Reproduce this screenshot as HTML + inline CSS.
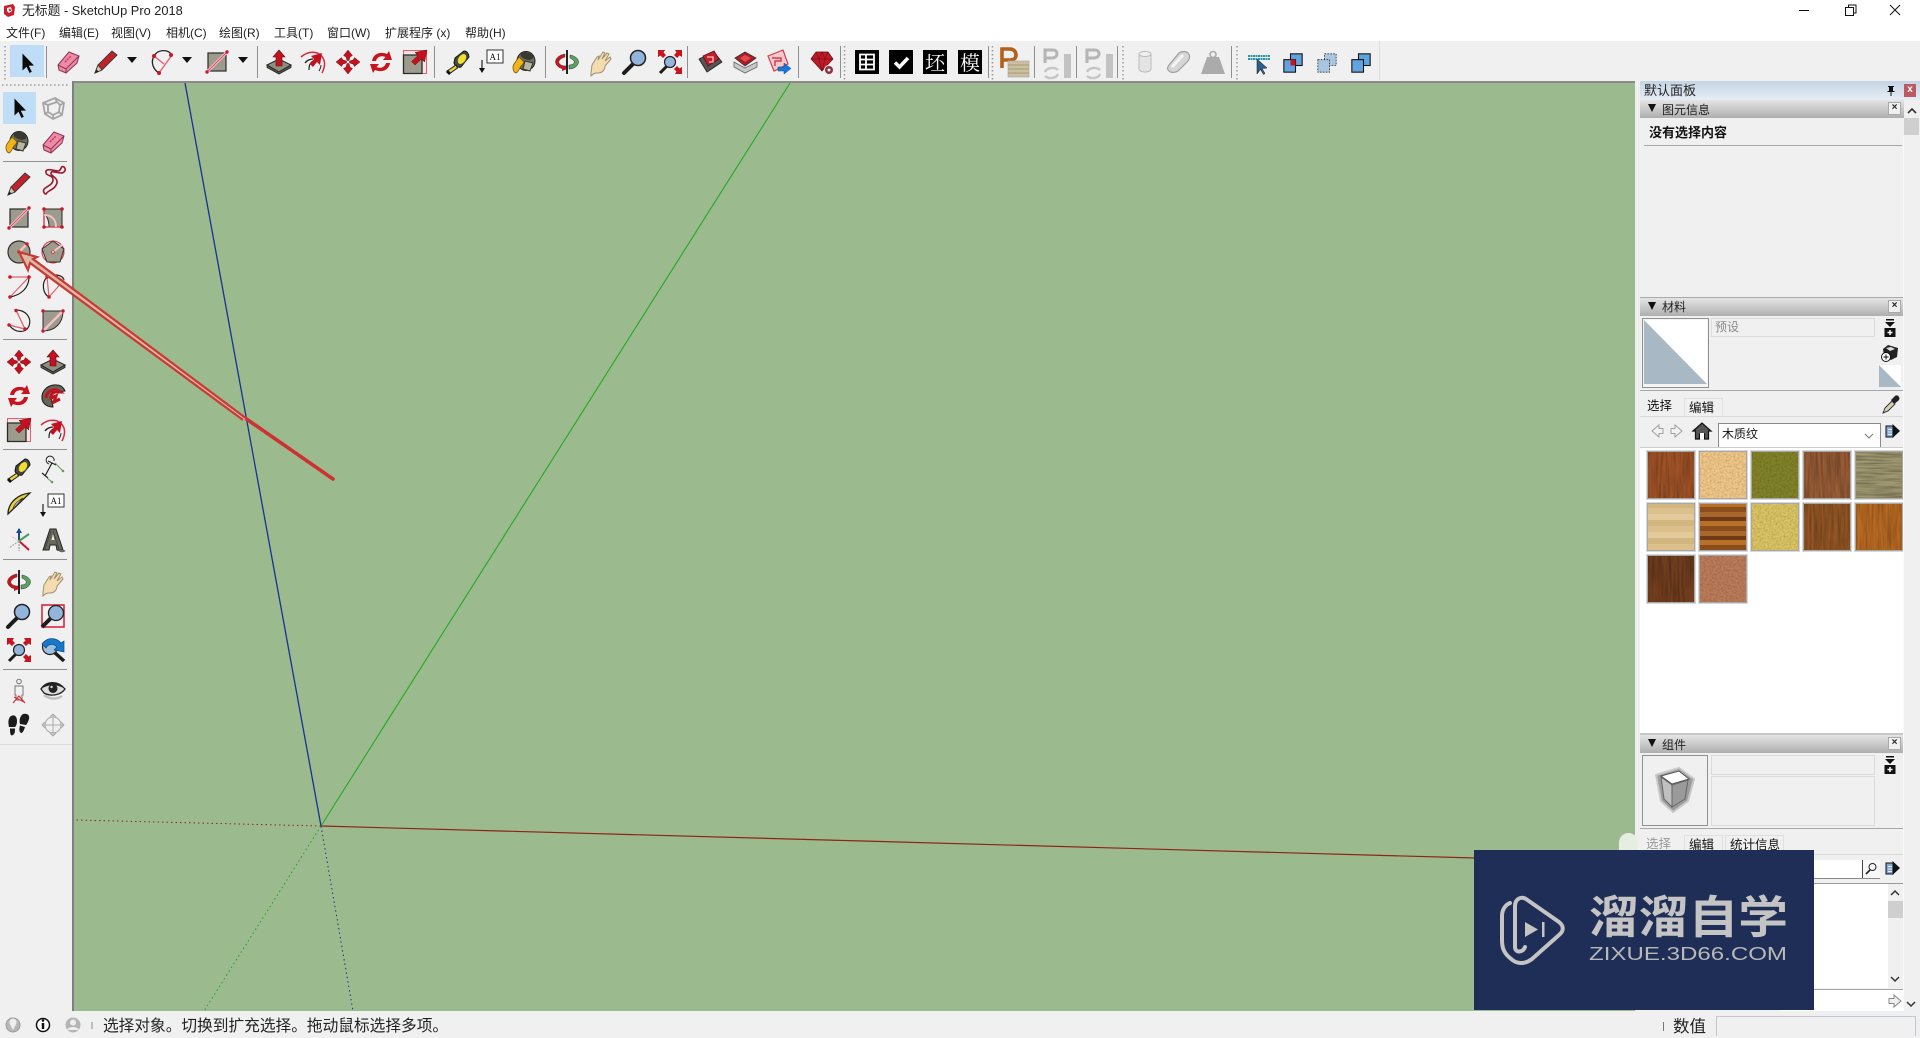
<!DOCTYPE html>
<html lang="zh">
<head>
<meta charset="utf-8">
<title>无标题 - SketchUp Pro 2018</title>
<style>
html,body{margin:0;padding:0;width:1920px;height:1036px;overflow:hidden;background:#f0f0f0;font-family:"Liberation Sans","Noto Sans CJK SC",sans-serif;color:#111}
.a{position:absolute;white-space:nowrap}
.b{position:absolute;box-sizing:border-box}
.hd{position:absolute;box-sizing:border-box;left:1640px;width:264px;height:18px;background:linear-gradient(#e4e4e4,#aeaeae);font-size:12px;line-height:18px;color:#222}
.hd i{position:absolute;left:8px;top:4px;width:0;height:0;border-left:4.500px solid transparent;border-right:4.500px solid transparent;border-top:8px solid #111}
.hd span{position:absolute;left:22px;top:1px}
.hd b{position:absolute;right:3px;top:2px;width:13px;height:13px;box-sizing:border-box;background:#f0f0f0;border:1px solid #aaa;font:bold 10px/10px "Liberation Sans",sans-serif;text-align:center;color:#222}
.sw{position:absolute;width:48px;height:48px;box-sizing:border-box;border:1px solid #a8a8a8;outline:1px solid #d8d8d8}
.sep{position:absolute;background:#8f8f8f}
.m{position:absolute;white-space:nowrap;top:25px;font-size:12px;line-height:16px;color:#222}
.vs{position:absolute;background:#8f8f8f;top:46px;width:1px;height:32px}
</style>
</head>
<body>
<svg width="0" height="0" style="position:absolute">
<defs>
<filter id="gv" x="0" y="0" width="100%" height="100%"><feTurbulence type="fractalNoise" baseFrequency="0.5 0.03" numOctaves="2" seed="3"/><feColorMatrix values="0 0 0 0 0 0 0 0 0 0 0 0 0 0 0 0.500 0 0 0 -0.160"/><feComposite in2="SourceAlpha" operator="in"/></filter>
<filter id="gh" x="0" y="0" width="100%" height="100%"><feTurbulence type="fractalNoise" baseFrequency="0.03 0.6" numOctaves="2" seed="5"/><feColorMatrix values="0 0 0 0 0 0 0 0 0 0 0 0 0 0 0 0.600 0 0 0 -0.180"/><feComposite in2="SourceAlpha" operator="in"/></filter>
<filter id="gs" x="0" y="0" width="100%" height="100%"><feTurbulence type="fractalNoise" baseFrequency="0.5" numOctaves="2" seed="8"/><feColorMatrix values="0 0 0 0 0 0 0 0 0 0 0 0 0 0 0 0.350 0 0 0 -0.120"/><feComposite in2="SourceAlpha" operator="in"/></filter>
<symbol id="sel" viewBox="0 0 24 24" overflow="visible"><path d="M7.500 2.500v17l4-3.800 3 6.300 2.300-1.200-3-6 5.200-.3z" fill="#0b0b0b"/></symbol>
<symbol id="box" viewBox="0 0 24 24" overflow="visible"><g fill="none" stroke="#a5a5a5" stroke-width="1.800"><path d="M2 7 14 2l9 5-2 12-9 4-8-5z"/><path d="M7 9l9-3 3 3-1 7-6 3-5-3z"/><path d="M2 7l5 2M14 2l2 4M23 7l-4 2M21 19l-3-3M12 23v-4M4 18l3-2"/></g></symbol>
<symbol id="erase" viewBox="0 0 24 24" overflow="visible"><path d="M2 15 13 2l10 4-2 7L10 23 3 20z" fill="#f08aa6" stroke="#8a3550" stroke-width="1"/><path d="M2 15l8 4 13-13" fill="none" stroke="#8a3550"/><path d="M10 19v4" stroke="#8a3550"/><path d="M9 12l6-6" stroke="#b84060" stroke-width="1.500" stroke-dasharray="2 1"/></symbol>
<symbol id="pencil" viewBox="0 0 24 24" overflow="visible"><path d="M1 23 4 15 18 1l5 4L8 20z" fill="#c4202c" stroke="#3a3a3a" stroke-width="1"/><path d="M1 23 4 15l4 5z" fill="#d9c6a0" stroke="#333" stroke-width=".8"/><path d="M1 23l1.500-3.500 2 2z" fill="#222"/></symbol>
<symbol id="arc" viewBox="0 0 24 24" overflow="visible"><path d="M4 6C8-1 18-1 22 5" fill="none" stroke="#222" stroke-width="1.300"/><path d="M4 6C0 13 4 20 9 23" fill="none" stroke="#222" stroke-width="1.300"/><path d="M4 6 14 14M22 5 9 23" stroke="#e06070" stroke-width="1.400" fill="none"/><g fill="#c8192b"><circle cx="4" cy="6" r="2"/><circle cx="21" cy="5" r="2"/><circle cx="9" cy="23" r="2"/></g></symbol>
<symbol id="rect" viewBox="0 0 24 24" overflow="visible"><rect x="3" y="3" width="18" height="18" fill="#9d9c8c" stroke="#2a2a2a" stroke-width="1.200"/><path d="M2 22 22 2" stroke="#f4c0c8" stroke-width="3"/><path d="M2 22 22 2" stroke="#d52b40" stroke-width=".8"/><circle cx="2" cy="22" r="1.700" fill="#c8192b"/><circle cx="22" cy="2" r="1.700" fill="#c8192b"/></symbol>
<symbol id="rotrect" viewBox="0 0 24 24" overflow="visible"><path d="M3 3H21V21H8C8 12 4 8 3 8z" fill="#9d9c8c" stroke="#2a2a2a"/><path d="M3 3v18H21" fill="none" stroke="#d52b40" stroke-width="1.300"/><path d="M3 9c8 0 12 5 12 12" fill="none" stroke="#f4c0c8" stroke-width="2"/><g fill="#c8192b"><circle cx="3" cy="3" r="1.800"/><circle cx="21" cy="3" r="1.800"/><circle cx="3" cy="21" r="1.800"/><circle cx="21" cy="21" r="1.800"/></g></symbol>
<symbol id="circle" viewBox="0 0 24 24" overflow="visible"><circle cx="12" cy="12" r="11" fill="#9d9c8c" stroke="#2e2e2e" stroke-width="1.200"/><path d="M12 12 20 4" stroke="#f4c0c8" stroke-width="2.500"/><circle cx="12" cy="12" r="1.700" fill="#c8192b"/><circle cx="20" cy="4" r="1.700" fill="#c8192b"/></symbol>
<symbol id="poly" viewBox="0 0 24 24" overflow="visible"><circle cx="12" cy="12" r="11" fill="#f0e4e4" stroke="#d52b40" stroke-width="1"/><path d="M12 1 23 9 19 22H6L1 9z" fill="#9d9c8c" stroke="#333" stroke-width="1"/><path d="M12 12 21 5" stroke="#f4c0c8" stroke-width="2"/><circle cx="12" cy="12" r="1.500" fill="#f4c0c8" stroke="#c8192b" stroke-width=".6"/></symbol>
<symbol id="arc1" viewBox="0 0 24 24" overflow="visible"><path d="M3 23C14 21 22 14 22 3" fill="none" stroke="#222" stroke-width="1.200"/><path d="M3 3H22L3 23" fill="none" stroke="#e06070" stroke-width="1.200"/><g fill="#c8192b"><circle cx="3" cy="3" r="1.800"/><circle cx="22" cy="3" r="1.800"/><circle cx="3" cy="23" r="1.800"/></g></symbol>
<symbol id="arc2" viewBox="0 0 24 24" overflow="visible"><path d="M6 3C0 9 2 20 8 23 M6 3C12 -1 22 1 23 6" fill="none" stroke="#222" stroke-width="1.200"/><path d="M6 3 23 6 8 23Z" fill="none" stroke="#e06070" stroke-width="1.200"/><g fill="#c8192b"><circle cx="6" cy="3" r="1.700"/><circle cx="8" cy="23" r="1.800"/></g></symbol>
<symbol id="arc3" viewBox="0 0 24 24" overflow="visible"><path d="M9 1C19 1 25 9 22 17 19 24 9 25 2 16" fill="none" stroke="#222" stroke-width="1.200"/><path d="M9 1 18 20 2 16" fill="none" stroke="#e06070" stroke-width="1.300"/><g fill="#c8192b"><circle cx="9" cy="1.500" r="1.700"/><circle cx="18" cy="20" r="1.700"/><circle cx="2" cy="16" r="1.700"/></g></symbol>
<symbol id="pie" viewBox="0 0 24 24" overflow="visible"><path d="M2 2H22C22 14 14 22 2 22Z" fill="#9d9c8c" stroke="#2e2e2e" stroke-width="1"/><path d="M2 22 22 2" stroke="#f4c0c8" stroke-width="2.500"/><g fill="#c8192b"><circle cx="2" cy="2" r="1.700"/><circle cx="22" cy="2" r="1.700"/><circle cx="2" cy="22" r="1.700"/></g></symbol>
<symbol id="move" viewBox="0 0 24 24" overflow="visible"><g fill="#c4101f" stroke="#501010" stroke-width=".4"><path d="M12 0 16.500 5.500 14 7 13 10.500H11L10 7 7.500 5.500z"/><path d="M12 24 16.500 18.500 14 17 13 13.500H11L10 17 7.500 18.500z"/><path d="M0 12 5.500 7.500 7 10 10.500 11V13L7 14 5.500 16.500z"/><path d="M24 12 18.500 7.500 17 10 13.500 11V13L17 14 18.500 16.500z"/></g></symbol>
<symbol id="push" viewBox="0 0 24 24" overflow="visible"><path d="M0 15 12 9l12 6-12 7z" fill="#8f8f7e" stroke="#222"/><path d="M0 15v2.500L12 24l12-6.500V15L12 22z" fill="#5b5b50" stroke="#222" stroke-width=".8"/><path d="M12 0 18 7H15V16H9V7H6z" fill="#c4101f" stroke="#601010" stroke-width=".6"/></symbol>
<symbol id="rotate" viewBox="0 0 24 24" overflow="visible"><g fill="#c8141f"><path d="M3 11C4 4 11 1 18 4L20 1 23 10 14 10 16.500 7C12 5 8 7 7 11z"/><path d="M21 13C20 20 13 23 6 20L4 23 1 14 10 14 7.500 17C12 19 16 17 17 13z"/></g></symbol>
<symbol id="follow" viewBox="0 0 24 24" overflow="visible"><path d="M1 15C0 6 8 0 16 1c4 0 7 3 8 6l-8 1c-5 0-6 5-5 9 0 3 1 5 1 6-6 0-10-3-11-8z" fill="#666658" stroke="#1a1a1a"/><path d="M5 14c0-6 6-9 11-8l3 2-5 0c-3 1-4 4-4 6l5-2-2 6 6-3" fill="none" stroke="#c4101f" stroke-width="3"/></symbol>
<symbol id="scale" viewBox="0 0 24 24" overflow="visible"><rect x=".500" y=".500" width="23" height="23" fill="#f4e4e4" stroke="#e06070"/><path d="M.500 5H19v18.500H.500z" fill="#9d9c8c" stroke="#2a2a2a" stroke-width="1.300"/><path d="M24 0 21.500 12 18.500 9 12 15 8.500 11.500 15 5.500 12 2.500z" fill="#c4101f" stroke="#601010" stroke-width=".5"/></symbol>
<symbol id="offset" viewBox="0 0 24 24" overflow="visible"><path d="M0 7C8 0 18 1 22 8c3 5 1 11-1 15" fill="none" stroke="#d52b40" stroke-width="1.500"/><path d="M4 13c2-3 6-4 8-4" fill="none" stroke="#222" stroke-width="1.300"/><path d="M8 20c0-5 1-7 4-9" fill="none" stroke="#222" stroke-width="1.200"/><path d="M21 3 19 15 16 12 12 17 9 14 13 9 10 6z" fill="#c4101f"/><path d="M18 21c1-2 2-3 2-6" fill="none" stroke="#222"/></symbol>
<symbol id="tape" viewBox="0 0 24 24" overflow="visible"><path d="M9 8 18 1c3 0 5 3 5 6l-8 10c-3 1-6-1-7-4z" fill="#4a4a40" stroke="#111"/><ellipse cx="16" cy="9" rx="4" ry="6" transform="rotate(35 16 9)" fill="#f0e030" stroke="#444"/><path d="M1 21 10 15l1.500 3L3 24z" fill="#e8d040" stroke="#222"/><path d="M0 22l3 3 2-2-3-3z" fill="#111"/></symbol>
<symbol id="dims" viewBox="0 0 24 24" overflow="visible"><g stroke="#222" stroke-width="1.200" fill="none"><path d="M11 5 4 18"/><path d="M7 3l8 4M1 15l6 5"/><path d="M13 3a4 4 0 1 0-5 3" stroke-width="1"/></g><path d="M14 5 22 13M6 20 11 24" stroke="#6a9a5a" stroke-width="1"/><circle cx="22" cy="13" r="1.300" fill="#6a9a5a"/><circle cx="11" cy="24" r="1.300" fill="#6a9a5a"/></symbol>
<symbol id="text" viewBox="0 0 24 24" overflow="visible"><rect x="7" y="0" width="16" height="13" fill="#fff" stroke="#333"/><path d="M2 10V19" stroke="#222" stroke-width="1.200"/><path d="M-1 18H5L2 23z" fill="#111"/><text x="15" y="10" font-family="Liberation Serif,serif" font-size="9" text-anchor="middle" fill="#111">A1</text></symbol>
<symbol id="paint" viewBox="0 0 24 24" overflow="visible"><ellipse cx="14" cy="11" rx="9" ry="9.500" fill="#6e6e60" stroke="#222"/><ellipse cx="15" cy="6" rx="6.500" ry="3.600" transform="rotate(15 15 6)" fill="#39392f"/><path d="M13 11l8 2-3 8-7-2z" fill="#b8b79c" stroke="#333"/><path d="M7 7 2 14c-2 3-1 8 2 9 2 0 3-4 5-7 2-2 3-4 3-4z" fill="#f2b418" stroke="#6a5000" stroke-width=".7"/></symbol>
<symbol id="prot" viewBox="0 0 24 24" overflow="visible"><path d="M1 22C1 10 12 2 23 1L1 22Z" fill="#e8d040" stroke="#222" stroke-width="1.300"/><path d="M6 17C7 12 12 8 16 6L6 17Z" fill="#f0f0f0" stroke="#333" stroke-width=".8"/></symbol>
<symbol id="axes" viewBox="0 0 24 24" overflow="visible"><path d="M12 13V1" stroke="#1a4a90" stroke-width="2"/><path d="M12 13 4 8" stroke="#f0b8b8" stroke-width="1" stroke-dasharray="2 1"/><path d="M12 13 22 22" stroke="#c8192b" stroke-width="2"/><path d="M12 13 22 6" stroke="#4a9a5a" stroke-width="2"/><path d="M12 13 2 20" stroke="#90b090" stroke-width="1" stroke-dasharray="2 1"/><path d="M12 13V23" stroke="#aaa" stroke-width="1.500" stroke-dasharray="2 1"/><path d="M12 0l3 5H9z" fill="#1a4a90"/></symbol>
<symbol id="t3d" viewBox="0 0 24 24" overflow="visible"><path d="M2 22 9 1H15L22 22H16L15 17H9L8 22z" fill="#6a6a5c" stroke="#222"/><path d="M4 21 10 3M12 3l6 18" stroke="#444" stroke-width="1"/><path d="M10.500 12 12 6l1.500 6z" fill="#f0f0f0"/><path d="M16 22l5 2 3-1-2-1z" fill="#8a8a78" stroke="#333" stroke-width=".6"/></symbol>
<symbol id="orbit" viewBox="0 0 24 24" overflow="visible"><path d="M10 4C3 5-1 10 1 14c2 4 6 5 10 5v-3c-3 0-6-1-7-3-1-2 2-5 6-6z" fill="#c8141f" stroke="#444" stroke-width=".5"/><path d="M15 5c6 1 10 5 8 9-2 4-6 5-9 5v-4c4 0 6-2 5-4-1-1-2-2-4-3z" fill="#5aa060" stroke="#333" stroke-width=".5"/><path d="M12 0V24" stroke="#222" stroke-width="2"/><path d="M7 16v5l5-2z" fill="#c8141f"/></symbol>
<symbol id="pan" viewBox="0 0 24 24" overflow="visible"><path d="M2 23 3 15 8 7l2-1-1 4 5-8 2 1-3 6 5-6 2 1-4 7 5-4 1 2-6 7c0 4-3 7-7 7-3 0-4 0-7 3z" fill="#f3ddb0" stroke="#a09070" stroke-width="1"/></symbol>
<symbol id="zoom" viewBox="0 0 24 24" overflow="visible"><path d="M1 23l9-9" stroke="#1c1c1c" stroke-width="4" stroke-linecap="round"/><circle cx="15" cy="8" r="7.500" fill="#93b5dc" stroke="#222" stroke-width="1.500"/></symbol>
<symbol id="zoomw" viewBox="0 0 24 24" overflow="visible"><rect x="1" y="1" width="22" height="22" fill="none" stroke="#d52b40" stroke-width="1.600"/><path d="M1 23l9-9" stroke="#1c1c1c" stroke-width="4"/><circle cx="15" cy="9" r="7.500" fill="#93b5dc" stroke="#222" stroke-width="1.300"/></symbol>
<symbol id="zoomx" viewBox="0 0 24 24" overflow="visible"><path d="M2 23 9 16" stroke="#1c1c1c" stroke-width="3"/><circle cx="12" cy="12" r="5.500" fill="#93b5dc" stroke="#222" stroke-width="1.200"/><g fill="#c8141f"><path d="M0 0H7L5.500 2.500 8 5 5 8 2.500 5.500 0 7z"/><path d="M24 0H17L18.500 2.500 16 5 19 8 21.500 5.500 24 7z"/><path d="M24 24H17L18.500 21.500 16 19 19 16 21.500 18.500 24 17z"/></g></symbol>
<symbol id="prev" viewBox="0 0 24 24" overflow="visible"><path d="M23 23 13 14" stroke="#1c1c1c" stroke-width="3.500"/><circle cx="9" cy="9" r="7.500" fill="#9ec0e0" stroke="#222" stroke-width="1.200"/><path d="M1 6C6-1 15-1 20 5L23 3 23 14 13 12 16 9C12 5 7 6 5 10z" fill="#1a78c8" stroke="#0a4a88" stroke-width=".7"/></symbol>
<symbol id="walk" viewBox="0 0 24 24" overflow="visible"><g fill="none" stroke="#777" stroke-width="1"><circle cx="12" cy="2.500" r="2.300"/><path d="M8 7h8l0 9-1 0 0 5h-6l0-5-1 0z"/></g><path d="M6 24 12 17 18 24M7 18l10 5" stroke="#d52b40" stroke-width="1.200" fill="none"/></symbol>
<symbol id="eye" viewBox="0 0 24 24" overflow="visible"><path d="M0 10C5 2 17 1 24 10c-4 6-14 8-21 4z" fill="#ddd" stroke="#222" stroke-width="1.300"/><path d="M0 10C5 2 17 1 24 10C17 5 7 5 0 10z" fill="#222"/><circle cx="12" cy="9.500" r="4.500" fill="#222"/><circle cx="10.500" cy="8" r="1.200" fill="#ddd"/><path d="M3 16c5 4 12 5 18 1" stroke="#c0c0c0" stroke-width="2.500" fill="none"/></symbol>
<symbol id="foot" viewBox="0 0 24 24" overflow="visible"><g fill="#1b1b1b"><path d="M4 3c4-2 6 1 6 5 0 3-1 5-2 6H2C1 10 1 5 4 3z"/><path d="M3 15.500h5c0 3 0 6-3 7-2 0-2-4-2-7z"/><path d="M16 1c4-1 7 1 6 5-1 3-2 5-3 6l-6-1c-1-4 0-8 3-10z"/><path d="M13 12.500 18 14c-1 3-2 6-4 6-2-1-2-4-1-7.500z"/></g></symbol>
<symbol id="sect" viewBox="0 0 24 24" overflow="visible"><g fill="none" stroke="#aaa" stroke-width="1"><circle cx="12" cy="12" r="8"/><path d="M12 1V23M1 12H23M12 1l-3 3M12 1l3 3M1 12l3-3M1 12l3 3M23 12l-3-3M23 12l-3 3M12 23l-3-3M12 23l3-3"/></g></symbol>
<symbol id="wh1" viewBox="0 0 24 24" overflow="visible"><path d="M1 9 16 2l8 10-15 10z" fill="#555" stroke="#222" stroke-width=".8"/><path d="M5 6 16 1l5 8-11 7z" fill="#c2202c" stroke="#5a1010" stroke-width=".8"/><path d="M9 7h6v5H11" fill="none" stroke="#f0c0c0" stroke-width="1.300"/></symbol>
<symbol id="wh2" viewBox="0 0 24 24" overflow="visible"><path d="M1 12 12 18l12-6v5L12 23 1 17z" fill="#c9c9c9" stroke="#666" stroke-width=".8"/><path d="M2 8 12 2l11 6-11 8z" fill="#b01a28" stroke="#333" stroke-width=".8"/><path d="M7 8l5-3 6 3-6 4z" fill="#e04a4a"/></symbol>
<symbol id="wh3" viewBox="0 0 24 24" overflow="visible"><path d="M1 6 16 0l5 14-14 7z" fill="#f6c8cc" stroke="#d04050" stroke-width="1.200"/><path d="M5 8h9v3H8v5" fill="none" stroke="#d04050" stroke-width="1.500"/><path d="M11 17h6v-4l7 5.500L17 24v-3h-6z" fill="#1a78d8" stroke="#0a4a88" stroke-width=".5"/></symbol>
<symbol id="ruby" viewBox="0 0 24 24" overflow="visible"><path d="M6 2H18L23 9 12 21 1 9z" fill="#c01a26" stroke="#601010" stroke-width=".7"/><path d="M1 9H23M6 2l3 7 3 12 3-12 3-7M9 9l3-7 3 7" fill="none" stroke="#7d0f18" stroke-width=".7"/><circle cx="19" cy="20" r="4.500" fill="#8a3040" stroke="#eee"/><circle cx="19" cy="20" r="1.500" fill="#eee"/></symbol>
<symbol id="stylei" viewBox="0 0 24 24" overflow="visible"><rect width="24" height="24" fill="#000"/><path d="M5 4.500H19V19.500H5ZM5 9.500H19M5 14.500H19M11 4.500V19.500" fill="none" stroke="#fff" stroke-width="1.800"/></symbol>
<symbol id="stylec" viewBox="0 0 24 24" overflow="visible"><rect width="24" height="24" fill="#000"/><path d="M6 12.500 10.500 17 19 8" fill="none" stroke="#fff" stroke-width="3.500"/></symbol>
<symbol id="P1" viewBox="0 0 30 36" overflow="visible"><path d="M3 22V3H11C15 3 17 6 17 9S15 14 11 14H3" fill="none" stroke="#b4601a" stroke-width="3.600"/><rect x="9" y="15" width="21" height="16" fill="#ccc0a0" stroke="#aaa" stroke-width=".7"/><path d="M9 19H30M9 23H30M9 27H30" stroke="#a89a78"/></symbol>
<symbol id="P2" viewBox="0 0 30 36" overflow="visible"><path d="M3 17V4H11C14 4 15 6 15 8S13 12 10 12H3" fill="none" stroke="#b5b5b5" stroke-width="3"/><rect x="22" y="8" width="7" height="24" fill="#c2c2c2"/><path d="M3 26c2-5 10-5 13-2M16 28c-2 5-10 5-13 2" fill="none" stroke="#c6c6c6" stroke-width="2.400"/></symbol>
<symbol id="cyl" viewBox="0 0 24 24" overflow="visible"><path d="M6 4v15c0 2 3 3 6 3s6-1 6-3V4z" fill="#e4e4e4" stroke="#bbb"/><ellipse cx="12" cy="4" rx="6" ry="2.500" fill="#f0f0f0" stroke="#bbb"/></symbol>
<symbol id="pill" viewBox="0 0 24 24" overflow="visible"><path d="M2 15 12 3c3-2 7-2 9 0s2 5 0 8L11 21c-3 2-7 2-9 0s-2-3 0-6z" fill="#d6d6d6" stroke="#a0a0a0" stroke-width="1.200"/><path d="M5 17 16 5" stroke="#f4f4f4" stroke-width="3"/></symbol>
<symbol id="wgt" viewBox="0 0 24 24" overflow="visible"><path d="M6 7H18L24 24H0z" fill="#ababab"/><circle cx="12" cy="4.500" r="3" fill="none" stroke="#ababab" stroke-width="1.600"/></symbol>
<symbol id="secp" viewBox="0 0 24 24" overflow="visible"><path d="M1 4H23M1 7H23" stroke="#2a98aa" stroke-width="2" stroke-dasharray="2 .5"/><path d="M10 7V22l3.500-4.500 3 5 1.500-1-3-5 5-.5z" fill="#2b5e8e" stroke="#111" stroke-width=".5"/></symbol>
<symbol id="sq1" viewBox="0 0 24 24" overflow="visible"><rect x="9" y="1" width="14" height="14" fill="#5fa4e0" stroke="#111" stroke-width="1.300"/><rect x="1" y="8" width="14" height="15" fill="#5fa4e0" stroke="#111" stroke-width="1.300"/><rect x="9" y="8" width="6" height="7" fill="#c8141f"/></symbol>
<symbol id="sq2" viewBox="0 0 24 24" overflow="visible"><rect x="9" y="1" width="14" height="14" fill="#a8c5e2" stroke="#333" stroke-dasharray="2 1.500"/><rect x="1" y="8" width="14" height="15" fill="#a8c5e2" stroke="#333" stroke-dasharray="2 1.500"/></symbol>
<symbol id="sq3" viewBox="0 0 24 24" overflow="visible"><rect x="9" y="1" width="14" height="14" fill="#5fa4e0" stroke="#111" stroke-width="1.300"/><rect x="1" y="8" width="14" height="15" fill="#5fa4e0" stroke="#111" stroke-width="1.300"/></symbol>
<symbol id="dl" viewBox="0 0 14 18" overflow="visible"><path d="M3 0H11V1.500H3zM2 3H12L7 8z" fill="#111"/><rect x="1.500" y="9" width="11" height="9" fill="#111"/><path d="M7 11V16M4.500 13.500H9.500" stroke="#fff" stroke-width="1.500"/></symbol>
<symbol id="go" viewBox="0 0 16 16" overflow="visible"><rect x="1" y="3" width="7" height="11" fill="#7fa8d8" stroke="#111"/><path d="M3 6.500H7M3 9H7M3 11.500H7" stroke="#eee"/><path d="M7.500 1 15 8 7.500 15z" fill="#111"/></symbol>
</defs>
</svg>

<!-- title & menu -->
<div class="b" style="left:0;top:0;width:1920px;height:41px;background:#fff"></div>
<svg class="a" style="left:2px;top:3px" width="15" height="15" viewBox="0 0 15 15"><path d="M2 3 11 1l2 3-1 8-6 2-4-3z" fill="#c8202c"/><path d="M5 5l4-1 1 4-3 2-2-2z" fill="#fff"/><path d="M6.500 6l2-.5.5 2-1.500 1z" fill="#c8202c"/></svg>
<div class="a" style="left:22px;top:3px;font-size:12.800px;line-height:16px;color:#222">无标题 - SketchUp Pro 2018</div>
<div class="m" style="left:6px">文件(F)</div>
<div class="m" style="left:59px">编辑(E)</div>
<div class="m" style="left:111px">视图(V)</div>
<div class="m" style="left:166px">相机(C)</div>
<div class="m" style="left:219px">绘图(R)</div>
<div class="m" style="left:274px">工具(T)</div>
<div class="m" style="left:327px">窗口(W)</div>
<div class="m" style="left:385px">扩展程序 (x)</div>
<div class="m" style="left:465px">帮助(H)</div>
<svg class="a" style="left:1790px;top:0" width="130" height="22" viewBox="0 0 130 22" fill="none" stroke="#111" stroke-width="1"><path d="M9 10.500H19"/><path d="M55.500 7.500h8v8h-8zM58.500 7.500v-2.500h7.500v8h-2"/><path d="M100 5l10 10M110 5 100 15"/></svg>

<!-- top toolbar bg -->
<div class="b" style="left:0;top:41px;width:1920px;height:40px;background:#f0f0f0"></div>
<div class="b" style="left:1379px;top:41px;width:1px;height:39px;background:#ddd"></div>
<div class="b" style="left:10px;top:45px;width:34px;height:32px;background:#bfddf7"></div>
<div class="b" style="left:3px;top:92px;width:33px;height:32px;background:#bfddf7"></div>

<!-- canvas -->
<div class="b" style="left:72px;top:81px;width:1563px;height:930px;background:#9bbb8f;border-left:2px solid #7e7e7e;border-top:2px solid #8a8a8a"></div>
<svg class="a" style="left:0;top:0" width="1920" height="1036" viewBox="0 0 1920 1036" fill="none">
<path d="M185 83 321 826" stroke="#1b2f95" stroke-width="1.300"/>
<path d="M790 83 321 826" stroke="#22aa22" stroke-width="1.100"/>
<path d="M321 826 1475 858" stroke="#8e2418" stroke-width="1.200"/>
<path d="M321 826 76 820" stroke="#8e2418" stroke-dasharray="1.500 3"/>
<path d="M321 826 204 1011" stroke="#1ea01e" stroke-dasharray="1.500 3"/>
<path d="M321 826 353 1011" stroke="#1b2f95" stroke-dasharray="1.500 3"/>
</svg>

<!-- right panel -->
<div class="b" style="left:1635px;top:81px;width:285px;height:930px;background:#f0f0f0"></div>
<div class="b" style="left:1640px;top:81px;width:280px;height:19px;background:linear-gradient(#c4d4e6,#e6edf4)"></div>
<div class="a" style="left:1644px;top:82px;font-size:13px;line-height:18px;color:#222">默认面板</div>
<div class="b" style="left:1904px;top:84px;width:12px;height:13px;background:#bd5a60;color:#fff;font:bold 10px/12px 'Liberation Sans',sans-serif;text-align:center">x</div>
<svg class="a" style="left:1885px;top:85px" width="12" height="12" viewBox="0 0 12 12" fill="#111"><path d="M3 1H9V2H8V6H9.500V7H6.500V11H5.500V7H2.500V6H4V2H3z"/></svg>
<div class="hd" style="top:100px"><i></i><span>图元信息</span><b>×</b></div>
<svg class="a" style="left:1905px;top:100px" width="15" height="36" viewBox="0 0 15 36" fill="none"><path d="M3 13l4-4 4 4" stroke="#333" stroke-width="1.600"/></svg>
<div class="b" style="left:1904px;top:118px;width:15px;height:17px;background:#cfcfcf"></div>
<div class="a" style="left:1649px;top:124px;font-size:13px;line-height:18px;font-weight:bold;color:#111">没有选择内容</div>
<div class="b" style="left:1644px;top:145px;width:258px;height:1px;background:#a8a8a8"></div>

<div class="b" style="left:1640px;top:297px;width:264px;height:1px;background:#aaa"></div>
<div class="hd" style="top:298px"><i></i><span style="top:0">材料</span><b>×</b></div>
<svg class="a" style="left:1642px;top:318px" width="67" height="70" viewBox="0 0 67 70"><rect x=".500" y=".500" width="66" height="69" fill="#f4f4f4" stroke="#909090"/><path d="M2 2H65V66z" fill="#fff"/><path d="M2 2V66H65z" fill="#a8b8c4"/></svg>
<div class="b" style="left:1711px;top:318px;width:164px;height:19px;background:#f0f0f0;border:1px solid #dcdcdc"></div>
<div class="a" style="left:1715px;top:319px;font-size:12px;line-height:17px;color:#8a8a8a">预设</div>
<div class="b" style="left:1640px;top:390px;width:264px;height:1px;background:#a8a8a8"></div>
<div class="b" style="left:1684px;top:398px;width:39px;height:19px;background:#f0f0f0;border:1px solid #e0e0e0;border-bottom:0"></div>
<div class="b" style="left:1640px;top:416px;width:264px;height:1px;background:#dadada"></div>
<div class="a" style="left:1647px;top:398px;font-size:12.500px;line-height:17px;color:#111">选择</div>
<div class="a" style="left:1689px;top:400px;font-size:12.500px;line-height:17px;color:#111">编辑</div>
<div class="b" style="left:1718px;top:423px;width:163px;height:24px;background:#fff;border:1px solid #8a8a8a;border-bottom:0"></div>
<div class="a" style="left:1722px;top:426px;font-size:12px;line-height:17px;color:#111">木质纹</div>
<svg class="a" style="left:1863px;top:431px" width="12" height="10" viewBox="0 0 12 10"><path d="M2 3l4 4 4-4" fill="none" stroke="#777"/></svg>
<svg class="a" style="left:1648px;top:420px" width="70" height="26" viewBox="0 0 70 26"><g fill="#f2f2f2" stroke="#a0a0a0"><path d="M4 11l7-6v3.500h4v5h-4V17z"/><path d="M34 11l-7-6v3.500h-4v5h4V17z"/></g><path d="M45 11l9-8 9 8h-2.500v8h-4v-5h-5v5h-4v-8z" fill="#555" stroke="#111" stroke-width="1.200"/><rect x="52" y="13" width="4" height="6" fill="#fff"/></svg>
<div class="b" style="left:1640px;top:447px;width:263px;height:286px;background:#fff;overflow:hidden;border-top:1px solid #ccc">
<div class="sw" style="left:7px;top:3px;background:#9f5226"></div>
<div class="sw" style="left:59px;top:3px;background:#f3c98a"></div>
<div class="sw" style="left:111px;top:3px;background:#828328"></div>
<div class="sw" style="left:163px;top:3px;background:#985c36"></div>
<div class="sw" style="left:215px;top:3px;background:#a29a72"></div>
<div class="sw" style="left:7px;top:55px;background:repeating-linear-gradient(0deg,#dcc08c 0 6px,#d2b680 6px 12px,#e2ca9a 12px 18px)"></div>
<div class="sw" style="left:59px;top:55px;background:repeating-linear-gradient(0deg,#8b4d1c 0 5px,#b87028 5px 10px,#6e3a18 10px 14px,#a8682c 14px 19px)"></div>
<div class="sw" style="left:111px;top:55px;background:#ddc665"></div>
<div class="sw" style="left:163px;top:55px;background:#925524"></div>
<div class="sw" style="left:215px;top:55px;background:#b96a22"></div>
<div class="sw" style="left:7px;top:107px;background:#713d1e"></div>
<div class="sw" style="left:59px;top:107px;background:#bd7c5a"></div>
<svg class="a" style="left:0;top:0" width="263" height="286" viewBox="0 0 263 286">
<rect x="8" y="4" width="46" height="46" filter="url(#gv)"/>
<rect x="60" y="4" width="46" height="46" filter="url(#gs)"/>
<rect x="112" y="4" width="46" height="46" filter="url(#gs)"/>
<rect x="164" y="4" width="46" height="46" filter="url(#gv)"/>
<rect x="216" y="4" width="46" height="46" filter="url(#gh)"/>
<rect x="112" y="56" width="46" height="46" filter="url(#gs)"/>
<rect x="164" y="56" width="46" height="46" filter="url(#gv)"/>
<rect x="216" y="56" width="46" height="46" filter="url(#gv)"/>
<rect x="8" y="108" width="46" height="46" filter="url(#gv)"/>
<rect x="60" y="108" width="46" height="46" filter="url(#gs)"/>
</svg>
</div>

<div class="b" style="left:1640px;top:733px;width:264px;height:2px;background:#c8c8c8"></div>
<div class="hd" style="top:735px"><i></i><span>组件</span><b>×</b></div>
<div class="b" style="left:1642px;top:755px;width:66px;height:71px;border:1px solid #909090;background:#f0f0f0"></div>
<svg class="a" style="left:1652px;top:765px" width="46" height="50" viewBox="0 0 46 50"><path d="M4 10 27 3 42 14 36 36 21 47 9 36z" fill="#9c9c9c" stroke="#c8c8c8" stroke-width="2"/><path d="M9 11 27 6 37 14 20 19z" fill="#fff" stroke="#555"/><path d="M20 20 36 15 33 34 20 42z" fill="#9a9a9a" stroke="#666"/><path d="M9 12 20 20V42L12 34z" fill="#c0c0c0" stroke="#666"/></svg>
<div class="b" style="left:1711px;top:755px;width:164px;height:20px;border:1px solid #dcdcdc"></div>
<div class="b" style="left:1711px;top:776px;width:164px;height:50px;border:1px solid #dcdcdc"></div>
<div class="b" style="left:1640px;top:828px;width:264px;height:1px;background:#a8a8a8"></div>
<div class="b" style="left:1684px;top:835px;width:39px;height:20px;border:1px solid #e0e0e0"></div>
<div class="b" style="left:1725px;top:835px;width:59px;height:20px;border:1px solid #e0e0e0"></div>
<div class="a" style="left:1646px;top:836px;font-size:12.500px;line-height:17px;color:#999">选择</div>
<div class="a" style="left:1689px;top:837px;font-size:12.500px;line-height:17px;color:#111">编辑</div>
<div class="a" style="left:1730px;top:837px;font-size:12.500px;line-height:17px;color:#111">统计信息</div>
<div class="b" style="left:1619px;top:833px;width:19px;height:30px;background:#e6eee2;border-radius:10px 10px 0 0"></div>
<div class="b" style="left:1640px;top:854px;width:264px;height:1px;background:#dadada"></div>
<div class="b" style="left:1780px;top:860px;width:100px;height:19px;background:#fff;border-bottom:1px solid #8a8a8a"></div>
<div class="b" style="left:1862px;top:860px;width:18px;height:18px;background:#f8f8f8;border-left:1px solid #444"></div>
<svg class="a" style="left:1864px;top:862px" width="14" height="14" viewBox="0 0 14 14" fill="none" stroke="#222"><circle cx="8.500" cy="5" r="3.500"/><path d="M6 8 2 12" stroke-width="1.600"/></svg>
<div class="b" style="left:1780px;top:883px;width:124px;height:1px;background:#999"></div>
<div class="b" style="left:1780px;top:884px;width:108px;height:104px;background:#fff"></div>
<div class="b" style="left:1888px;top:884px;width:15px;height:104px;background:#f0f0f0"></div>
<svg class="a" style="left:1888px;top:884px" width="15" height="104" viewBox="0 0 15 104" fill="none" stroke="#333" stroke-width="1.500"><path d="M3 11l4-4 4 4M3 93l4 4 4-4"/></svg>
<div class="b" style="left:1888px;top:901px;width:15px;height:17px;background:#cfcfcf"></div>
<div class="b" style="left:1780px;top:989px;width:124px;height:1px;background:#a8a8a8"></div>
<div class="b" style="left:1780px;top:990px;width:123px;height:21px;background:#fff"></div>
<svg class="a" style="left:1887px;top:990px" width="33" height="22" viewBox="0 0 33 22" fill="none"><path d="M2 11l7-6v3.500h5v5H9V17z" transform="matrix(-1 0 0 1 16 0)" stroke="#888" fill="#efefef"/><path d="M20 12l4 4 4-4" stroke="#333" stroke-width="1.500"/></svg>
<div class="b" style="left:1903px;top:136px;width:1px;height:875px;background:#fafafa"></div>

<!-- status bar -->
<div class="b" style="left:0;top:1011px;width:1920px;height:25px;background:#f0f0f0"></div>
<svg class="a" style="left:0;top:1013px" width="100" height="23" viewBox="0 0 100 23"><circle cx="13" cy="12" r="7" fill="#b8b8b8" stroke="#999"/><path d="M13 5.500a3.500 3.500 0 0 1 3.500 3.500c0 2-2 5-3.500 8-1.500-3-3.500-6-3.500-8A3.500 3.500 0 0 1 13 5.500z" fill="#eee"/><circle cx="43" cy="12" r="6.500" fill="#fff" stroke="#111" stroke-width="1.500"/><path d="M43 10v6" stroke="#111" stroke-width="2.500"/><circle cx="43" cy="7.500" r="1.300" fill="#111"/><circle cx="73" cy="12" r="7.500" fill="#b5b5b5"/><circle cx="73" cy="9.500" r="3" fill="#eee"/><path d="M67 17c2-4 10-4 12 0" fill="#eee"/><path d="M92 9v7" stroke="#888"/></svg>
<div class="a" style="left:103px;top:1016px;font-size:15.700px;line-height:22px;color:#222">选择对象。切换到扩充选择。拖动鼠标选择多项。</div>
<div class="b" style="left:1663px;top:1022px;width:1px;height:9px;background:#777"></div>
<div class="a" style="left:1673px;top:1016px;font-size:16.500px;line-height:22px;color:#222">数值</div>
<div class="b" style="left:1716px;top:1016px;width:200px;height:20px;background:#f0f0f0;border:1px solid #c0c8d4;border-bottom:0"></div>

<!-- toolbar separators -->
<div class="vs" style="left:46px"></div>
<div class="vs" style="left:257px"></div>
<div class="vs" style="left:434px"></div>
<div class="vs" style="left:545px"></div>
<div class="vs" style="left:687px"></div>
<div class="vs" style="left:798px"></div>
<div class="vs" style="left:840px"></div>
<div class="vs" style="left:988px"></div>
<div class="vs" style="left:1034px"></div>
<div class="vs" style="left:1076px"></div>
<div class="vs" style="left:1117px"></div>
<div class="vs" style="left:1231px"></div>
<div class="sep" style="left:3px;top:161px;width:64px;height:1px"></div>
<div class="sep" style="left:3px;top:339px;width:64px;height:1px"></div>
<div class="sep" style="left:3px;top:449px;width:64px;height:1px"></div>
<div class="sep" style="left:3px;top:559px;width:64px;height:1px"></div>
<div class="sep" style="left:3px;top:669px;width:64px;height:1px"></div>
<div class="b" style="left:0;top:744px;width:72px;height:1px;background:#ddd"></div>

<!-- icons -->
<svg class="a" style="left:0;top:0" width="1920" height="1036" viewBox="0 0 1920 1036">
<g fill="none" stroke="#9a9a9a" stroke-dasharray="1.500 2.500" stroke-width="1.500"><path d="M5 46V80"/><path d="M2 85H70"/><path d="M844.500 46V80"/><path d="M992.500 46V80"/><path d="M1123 46V80"/><path d="M1237 46V80"/></g>
<use href="#sel" x="15" y="51" width="24" height="24"/>
<use href="#erase" x="56" y="50" width="24" height="24"/>
<use href="#pencil" x="94" y="50" width="24" height="24"/>
<path d="M127 57h10l-5 6z M182 57h10l-5 6z M238 57h10l-5 6z" fill="#111"/>
<use href="#arc" x="150" y="50" width="24" height="24"/>
<use href="#rect" x="205" y="50" width="24" height="24"/>
<use href="#push" x="267" y="50" width="24" height="24"/>
<use href="#offset" x="301" y="50" width="24" height="24"/>
<use href="#move" x="336" y="50" width="24" height="24"/>
<use href="#rotate" x="369" y="50" width="24" height="24"/>
<use href="#scale" x="403" y="50" width="24" height="24"/>
<use href="#tape" x="446" y="50" width="24" height="24"/>
<use href="#text" x="480" y="50" width="24" height="24"/>
<use href="#paint" x="512" y="50" width="24" height="24"/>
<use href="#orbit" x="555" y="50" width="24" height="24"/>
<use href="#pan" x="589" y="50" width="24" height="24"/>
<use href="#zoom" x="623" y="50" width="24" height="24"/>
<use href="#zoomx" x="658" y="50" width="24" height="24"/>
<use href="#wh1" x="698" y="50" width="24" height="24"/>
<use href="#wh2" x="733" y="50" width="24" height="24"/>
<use href="#wh3" x="767" y="50" width="24" height="24"/>
<use href="#ruby" x="810" y="50" width="24" height="24"/>
<use href="#stylei" x="855" y="50" width="24" height="24"/>
<use href="#stylec" x="889" y="50" width="24" height="24"/>
<rect x="923" y="50" width="24" height="24" fill="#000"/>
<text x="935" y="70" font-family="Noto Serif CJK SC,serif" font-size="20" fill="#fff" text-anchor="middle">坯</text>
<rect x="958" y="50" width="24" height="24" fill="#000"/>
<text x="970" y="70" font-family="Noto Serif CJK SC,serif" font-size="20" fill="#fff" text-anchor="middle">模</text>
<use href="#P1" x="999" y="46" width="30" height="36"/>
<use href="#P2" x="1042" y="46" width="30" height="36"/>
<use href="#P2" x="1084" y="46" width="30" height="36"/>
<use href="#cyl" x="1133" y="50" width="24" height="24"/>
<use href="#pill" x="1167" y="50" width="24" height="24"/>
<use href="#wgt" x="1201" y="50" width="24" height="24"/>
<use href="#secp" x="1247" y="52" width="24" height="24"/>
<use href="#sq1" x="1283" y="53" width="20" height="20"/>
<use href="#sq2" x="1317" y="53" width="20" height="20"/>
<use href="#sq3" x="1351" y="53" width="20" height="20"/>

<use href="#sel" x="7" y="96" width="24" height="24"/><use href="#box" x="41" y="96" width="24" height="24"/>
<use href="#paint" x="5" y="130" width="24" height="24"/><use href="#erase" x="41" y="130" width="24" height="24"/>
<use href="#pencil" x="7" y="172" width="24" height="24"/>
<path d="M45 194c-6-7 8-7 8-14 0-6-8-3-7-9 2-3 9 0 12 0 4 0 2-6 6-4 3 3 0 6-3 6-6 0-9-3-10 0s7 4 6 10c-2 7-9 7-11 11z" fill="none" stroke="#9a1b30" stroke-width="1.600"/>
<use href="#rect" x="7" y="206" width="24" height="24"/><use href="#rotrect" x="41" y="206" width="24" height="24"/>
<use href="#circle" x="7" y="240" width="24" height="24"/><use href="#poly" x="41" y="240" width="24" height="24"/>
<use href="#arc1" x="7" y="274" width="24" height="24"/><use href="#arc2" x="41" y="274" width="24" height="24"/>
<use href="#arc3" x="7" y="309" width="24" height="24"/><use href="#pie" x="41" y="309" width="24" height="24"/>
<use href="#move" x="7" y="350" width="24" height="24"/><use href="#push" x="41" y="350" width="24" height="24"/>
<use href="#rotate" x="7" y="384" width="24" height="24"/><use href="#follow" x="41" y="384" width="24" height="24"/>
<use href="#scale" x="7" y="418" width="24" height="24"/><use href="#offset" x="41" y="418" width="24" height="24"/>
<use href="#tape" x="7" y="458" width="24" height="24"/><use href="#dims" x="41" y="458" width="24" height="24"/>
<use href="#prot" x="7" y="492" width="24" height="24"/><use href="#text" x="41" y="494" width="24" height="24"/>
<use href="#axes" x="7" y="528" width="24" height="24"/><use href="#t3d" x="41" y="528" width="24" height="24"/>
<use href="#orbit" x="7" y="570" width="24" height="24"/><use href="#pan" x="41" y="570" width="24" height="24"/>
<use href="#zoom" x="7" y="604" width="24" height="24"/><use href="#zoomw" x="41" y="604" width="24" height="24"/>
<use href="#zoomx" x="7" y="638" width="24" height="24"/><use href="#prev" x="41" y="638" width="24" height="24"/>
<use href="#walk" x="7" y="679" width="24" height="24"/><use href="#eye" x="41" y="679" width="24" height="24"/>
<use href="#foot" x="7" y="713" width="24" height="24"/><use href="#sect" x="41" y="713" width="24" height="24"/>

<use href="#dl" x="1883" y="319" width="14" height="18"/>
<use href="#dl" x="1883" y="756" width="14" height="18"/>
<g transform="translate(1880 342)"><path d="M3 7 8 3l10 3-1 9-6 3-7-3z" fill="#222"/><path d="M6 6l5-1 4 2-5 2z" fill="#ddd"/><circle cx="6" cy="15" r="4.500" fill="#fff" stroke="#111"/><path d="M6 12.500v5M3.500 15h5" stroke="#111"/></g>
<path d="M1879 365H1901V387H1898z" fill="#fff"/><path d="M1879 365V387H1901z" fill="#a8b8c4"/>
<g transform="translate(1882 395)"><path d="M1 18 3 13 10 6 13 9 6 16z" fill="#d8d0b0" stroke="#333"/><path d="M9 5 13 1c1-1 3-1 4 1s0 3-1 4l-4 3z" fill="#222"/></g>
<use href="#go" x="1885" y="423" width="16" height="16"/>
<use href="#go" x="1885" y="860" width="16" height="16"/>
</svg>

<!-- watermark -->
<div class="b" style="left:1474px;top:850px;width:340px;height:160px;background:#1f2e57"></div>
<svg class="a" style="left:1474px;top:850px" width="340" height="160" viewBox="0 0 340 160">
<path d="M41 97V56C41 49 47 46 52 49L85 72C90 76 90 81 85 85L58 109C50 115 42 114 36 108 30 103 28 98 28 90V66C28 60 31 55 36 53M41 97C41 103 49 103 51 97" fill="none" stroke="#c4c4c4" stroke-width="4" stroke-linecap="round"/>
<path d="M51 72l13 7.500-13 7.500z" fill="#c4c4c4"/><rect x="68" y="72" width="2.500" height="15" fill="#c4c4c4"/>
<text x="115" y="83" font-family="Noto Sans CJK SC,sans-serif" font-weight="700" font-size="45" textLength="199" lengthAdjust="spacingAndGlyphs" fill="#c4c4c4">溜溜自学</text>
<text x="115" y="110" font-family="Liberation Sans,sans-serif" font-size="18" textLength="198" lengthAdjust="spacingAndGlyphs" fill="#b8b8b8">ZIXUE.3D66.COM</text>
</svg>

<!-- red arrow annotation -->
<svg class="a" style="left:0;top:0" width="400" height="500" viewBox="0 0 400 500" fill="none">
<path d="M333 479 245 418" stroke="#cc3232" stroke-width="3.600" stroke-linecap="round"/>
<path d="M247 419 33 259 37 257 19 252 28 270 30 263 243 420" fill="#dcb8a4" stroke="#c83a35" stroke-width="2.200" stroke-linejoin="miter"/>
</svg>
</body>
</html>
